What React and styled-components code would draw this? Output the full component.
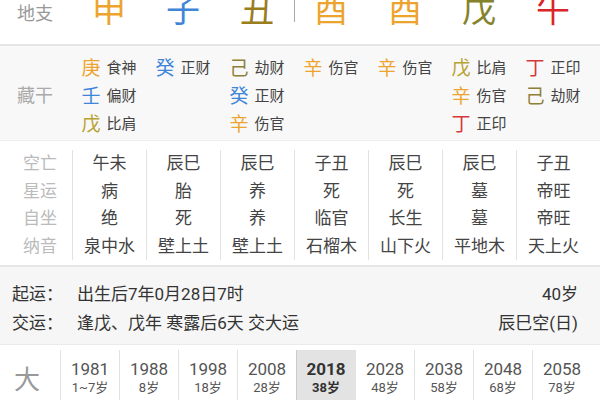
import styled, { createGlobalStyle } from 'styled-components';

const GlobalStyle = createGlobalStyle`
  html, body {
    margin: 0;
    padding: 0;
    background: #fff;
    overflow: hidden;
  }
  body {
    font-family: Roboto, "Noto Sans CJK SC", sans-serif;
    color: #444;
  }
`;

const COLORS = {
  metal: '#eca42e',
  water: '#3f85d8',
  earth: '#9a7e1e',
  earth2: '#85822c',
  fire: '#d8262a',
};

const stemColor = {
  庚: COLORS.metal,
  辛: COLORS.metal,
  壬: COLORS.water,
  癸: COLORS.water,
  戊: '#b9a232',
  己: '#8f8038',
  丁: '#d53a3a',
};

const branches = [
  { ch: '申', color: COLORS.metal },
  { ch: '子', color: COLORS.water },
  { ch: '丑', color: COLORS.earth },
  { ch: '酉', color: COLORS.metal, divider: true },
  { ch: '酉', color: COLORS.metal },
  { ch: '戊', color: COLORS.earth2 },
  { ch: '午', color: COLORS.fire },
];

const hidden = [
  [['庚', '食神'], ['壬', '偏财'], ['戊', '比肩']],
  [['癸', '正财']],
  [['己', '劫财'], ['癸', '正财'], ['辛', '伤官']],
  [['辛', '伤官']],
  [['辛', '伤官']],
  [['戊', '比肩'], ['辛', '伤官'], ['丁', '正印']],
  [['丁', '正印'], ['己', '劫财']],
];

const infoLabels = ['空亡', '星运', '自坐', '纳音'];
const info = [
  ['午未', '病', '绝', '泉中水'],
  ['辰巳', '胎', '死', '壁上土'],
  ['辰巳', '养', '养', '壁上土'],
  ['子丑', '死', '临官', '石榴木'],
  ['辰巳', '死', '长生', '山下火'],
  ['辰巳', '墓', '墓', '平地木'],
  ['子丑', '帝旺', '帝旺', '天上火'],
];

const luck = [
  ['1981', '1~7岁'],
  ['1988', '8岁'],
  ['1998', '18岁'],
  ['2008', '28岁'],
  ['2018', '38岁', true],
  ['2028', '48岁'],
  ['2038', '58岁'],
  ['2048', '68岁'],
  ['2058', '78岁'],
];

const App = () => (
  <Page>
    <GlobalStyle />
    <BranchRow>
      <SideLabel>地支</SideLabel>
      {branches.map((b, i) => (
        <BranchCell key={i} $color={b.color} $divider={b.divider}>
          {b.ch}
        </BranchCell>
      ))}
    </BranchRow>

    <HiddenSection>
      <HiddenLabel>藏干</HiddenLabel>
      {hidden.map((col, i) => (
        <HiddenCol key={i}>
          {col.map(([stem, god], j) => (
            <HiddenItem key={j}>
              <Stem $color={stemColor[stem]}>{stem}</Stem>
              <God>{god}</God>
            </HiddenItem>
          ))}
        </HiddenCol>
      ))}
    </HiddenSection>

    <InfoSection>
      <InfoCol>
        {infoLabels.map((l) => (
          <InfoLabel key={l}>{l}</InfoLabel>
        ))}
      </InfoCol>
      {info.map((col, i) => (
        <InfoCol key={i} $bordered>
          {col.map((v, j) => (
            <InfoValue key={j}>{v}</InfoValue>
          ))}
        </InfoCol>
      ))}
    </InfoSection>

    <LuckInfo>
      <LuckLine>
        <LuckKey>起运：</LuckKey>
        <LuckText>出生后7年0月28日7时</LuckText>
        <LuckRight>40岁</LuckRight>
      </LuckLine>
      <LuckLine>
        <LuckKey>交运：</LuckKey>
        <LuckText>逢戊、戊年 寒露后6天 交大运</LuckText>
        <LuckRight>辰巳空(日)</LuckRight>
      </LuckLine>
    </LuckInfo>

    <DaYunRow>
      <DaYunLabel>大</DaYunLabel>
      {luck.map(([year, age, active]) => (
        <DaYunCell key={year} $active={active}>
          <Year>{year}</Year>
          <Age>{age}</Age>
        </DaYunCell>
      ))}
    </DaYunRow>
  </Page>
);

const Page = styled.div`
  width: 600px;
  height: 400px;
  overflow: hidden;
  background: #fff;
`;

const COLS = '72px repeat(7, 74px) 1fr';

const BranchRow = styled.div`
  display: grid;
  grid-template-columns: ${COLS};
  height: 67px;
  margin-top: -23px;
  align-items: center;
  border-bottom: 2px solid #e6e6e6;
`;

const SideLabel = styled.div`
  font-size: 18px;
  color: #999;
  padding-left: 17px;
  margin-top: 2px;
`;

const BranchCell = styled.div`
  position: relative;
  text-align: center;
  font-size: 34px;
  line-height: 67px;
  color: ${(p) => p.$color};

  &::before {
    content: '';
    display: ${(p) => (p.$divider ? 'block' : 'none')};
    position: absolute;
    left: 0;
    top: 16px;
    height: 29px;
    width: 1px;
    background: #aaa;
  }
`;

const HiddenSection = styled.div`
  display: grid;
  grid-template-columns: ${COLS};
  background: #f8f8f8;
  padding: 6px 0 4px;
  height: 84px;
`;

const HiddenLabel = styled.div`
  font-size: 18px;
  color: #aaa;
  padding-left: 17px;
  align-self: center;
`;

const HiddenCol = styled.div`
  display: flex;
  flex-direction: column;
  align-items: center;
`;

const HiddenItem = styled.div`
  display: flex;
  align-items: center;
  gap: 6px;
  height: 28px;
`;

const Stem = styled.span`
  font-size: 19px;
  color: ${(p) => p.$color};
`;

const God = styled.span`
  font-size: 15px;
  color: #444;
`;

const InfoSection = styled.div`
  display: grid;
  grid-template-columns: ${COLS};
  background: #fff;
  border-top: 1px solid #eee;
  padding: 9px 0 5px;
  border-bottom: 2px solid #e6e6e6;
`;

const InfoCol = styled.div`
  display: flex;
  flex-direction: column;
  align-items: center;
  border-left: ${(p) => (p.$bordered ? '1px solid #e2e2e2' : 'none')};
`;

const InfoLabel = styled.div`
  font-size: 17px;
  line-height: 27.5px;
  color: #bbb;
  padding-left: 8px;
`;

const InfoValue = styled.div`
  font-size: 17px;
  line-height: 27.5px;
  color: #444;
`;

const LuckInfo = styled.div`
  background: #f6f6f6;
  padding: 11px 22px 8px 12px;
  border-bottom: 1px solid #eaeaea;
`;

const LuckLine = styled.div`
  display: flex;
  align-items: center;
  height: 29px;
  font-size: 17px;
  color: #333;
`;

const LuckKey = styled.span`
  width: 65px;
`;

const LuckText = styled.span`
  flex: 1;
`;

const LuckRight = styled.span`
  text-align: right;
`;

const DaYunRow = styled.div`
  display: grid;
  grid-template-columns: 60px repeat(9, 59px) 1fr;
  margin-top: 5px;
  height: 60px;
`;

const DaYunLabel = styled.div`
  font-size: 26px;
  color: #999;
  padding-left: 14px;
  align-self: center;
  margin-top: -6px;
`;

const DaYunCell = styled.div`
  display: flex;
  flex-direction: column;
  align-items: center;
  padding-top: 9px;
  border-left: 1px solid ${(p) => (p.$active ? '#ccc' : '#e2e2e2')};
  background: ${(p) => (p.$active ? '#e3e3e3' : 'transparent')};
  color: ${(p) => (p.$active ? '#333' : '#555')};
  font-weight: ${(p) => (p.$active ? 700 : 400)};
`;

const Year = styled.div`
  font-size: 17px;
  line-height: 20px;
`;

const Age = styled.div`
  font-size: 13px;
  line-height: 18px;
`;

export default App;
